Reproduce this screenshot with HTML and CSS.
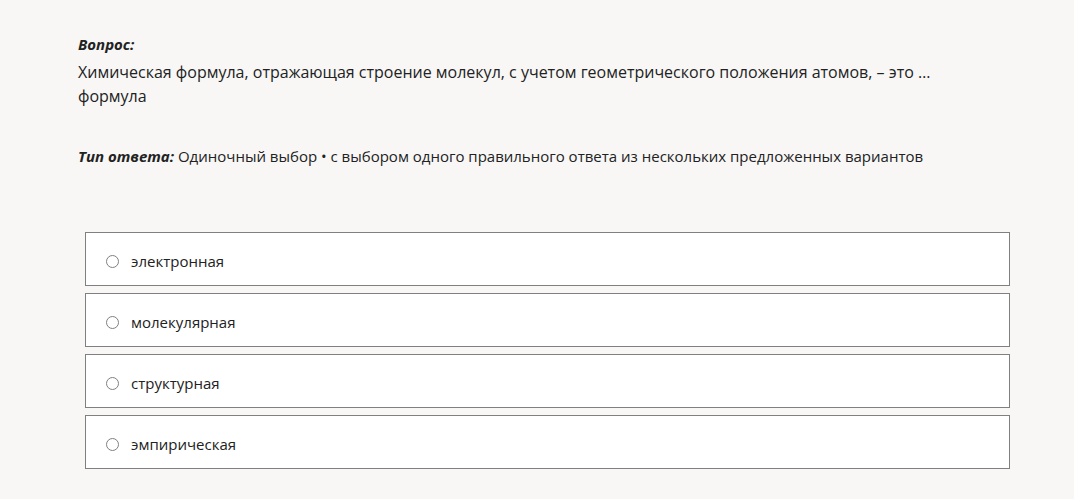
FILE: index.html
```html
<!DOCTYPE html>
<html lang="ru">
<head>
  <meta charset="UTF-8">
  <meta name="viewport" content="width=device-width, initial-scale=1.0">
  <title>Вопрос</title>
  <link rel="stylesheet" href="styles.css">
</head>
<body>

  <div class="question">
    <div class="label">Вопрос:</div>
    <p class="question-text">Химическая формула, отражающая строение молекул, с учетом геометрического положения атомов, – это … формула</p>
    <p class="answer-type"><span class="label">Тип ответа:</span> Одиночный выбор • с выбором одного правильного ответа из нескольких предложенных вариантов</p>
  </div>

  <div class="options">
    <label class="option"><input type="radio" name="answer"><span>электронная</span></label>
    <label class="option"><input type="radio" name="answer"><span>молекулярная</span></label>
    <label class="option"><input type="radio" name="answer"><span>структурная</span></label>
    <label class="option"><input type="radio" name="answer"><span>эмпирическая</span></label>
  </div>

</body>
</html>
```

FILE: styles.css
```css
/* Общие стили */
body {
  font-family: "Open Sans", "Noto Sans", sans-serif;
  background-color: #f8f7f6;
  color: #222222;
  margin: 0;
  padding: 34px 0 0 78px;
}

/* Вопрос */
.question {
  width: 900px;
}

.label {
  font-style: italic;
  font-weight: 700;
  font-size: 15px;
  line-height: 20px;
}

.question-text {
  margin: 6px 0 0;
  font-size: 16px;
  line-height: 24px;
}

.answer-type {
  margin: 36px 0 0;
  font-size: 15px;
  line-height: 24px;
}

/* Варианты ответа */
.options {
  margin-top: 64px;
  margin-left: 7px;
  width: 925px;
  display: flex;
  flex-direction: column;
  gap: 7px;
}

.option {
  display: flex;
  align-items: center;
  box-sizing: border-box;
  height: 54px;
  background-color: #ffffff;
  border: 1px solid #808080;
  padding: 4px 0 0 20px;
  font-size: 15px;
  cursor: pointer;
}

.option input {
  appearance: none;
  width: 13px;
  height: 13px;
  margin: 0 12px 0 0;
  border: 1px solid #808080;
  border-radius: 50%;
  background-color: #ffffff;
}
```
